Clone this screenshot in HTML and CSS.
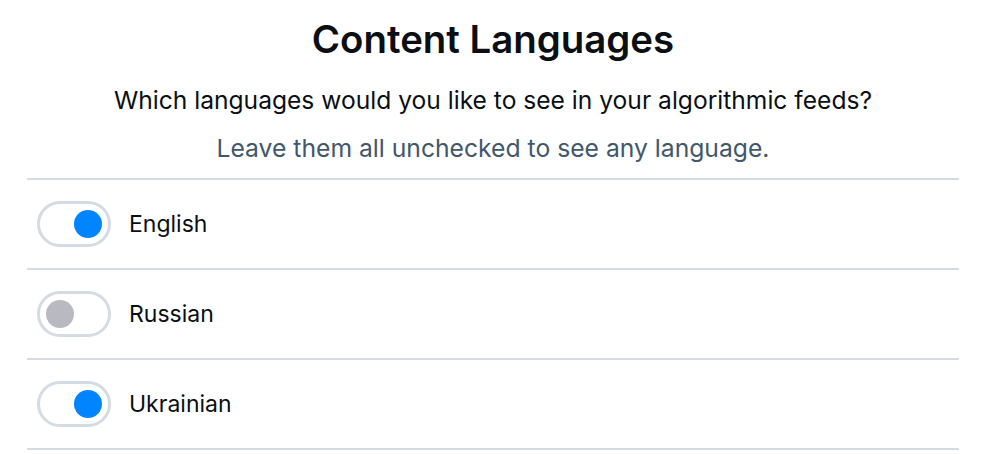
FILE: index.html
```html
<!DOCTYPE html>
<html>
<head>
<meta charset="utf-8">
<link rel="stylesheet" href="styles.css">
</head>
<body>
<div class="panel">
  <h1 class="title">Content Languages</h1>
  <p class="subtitle">Which languages would you like to see in your algorithmic feeds?</p>
  <p class="hint">Leave them all unchecked to see any language.</p>
  <ul class="list">
    <li class="row"><span class="toggle on"><span class="knob"></span></span><span class="label">English</span></li>
    <li class="row"><span class="toggle"><span class="knob"></span></span><span class="label">Russian</span></li>
    <li class="row"><span class="toggle on"><span class="knob"></span></span><span class="label">Ukrainian</span></li>
  </ul>
</div>
</body>
</html>
```
FILE: styles.css
```css
html, body {
  margin: 0;
  background: #ffffff;
}
body {
  font-family: Inter, "Noto Sans", sans-serif;
  color: #0b0f14;
}
.panel {
  width: 932px;
  margin-left: 27px;
  padding-top: 15px;
}
.title {
  margin: 0;
  text-align: center;
  font-size: 38.4px;
  font-weight: 600;
  line-height: 48px;
}
.subtitle {
  margin: 22px 0 0;
  text-align: center;
  font-size: 24.6px;
  line-height: 30px;
}
.hint {
  margin: 18px 0 0;
  text-align: center;
  font-size: 24.7px;
  line-height: 30px;
  color: #42576c;
}
.list {
  list-style: none;
  margin: 15px 0 0;
  padding: 0;
  border-top: 2px solid #d4dbe2;
}
.row {
  height: 88px;
  display: flex;
  align-items: center;
  gap: 18px;
  padding-left: 10px;
  border-bottom: 2px solid #d4dbe2;
}
.toggle {
  box-sizing: border-box;
  width: 74px;
  height: 46px;
  border: 3px solid #d4dbe2;
  border-radius: 23px;
  display: flex;
  align-items: center;
  padding: 0 6px;
  background: #fff;
}
.toggle.on {
  justify-content: flex-end;
}
.knob {
  width: 28px;
  height: 28px;
  border-radius: 50%;
  background: #b9b9c1;
}
.toggle.on .knob {
  background: #0085ff;
}
.label {
  font-size: 23px;
  line-height: 28px;
}
```
